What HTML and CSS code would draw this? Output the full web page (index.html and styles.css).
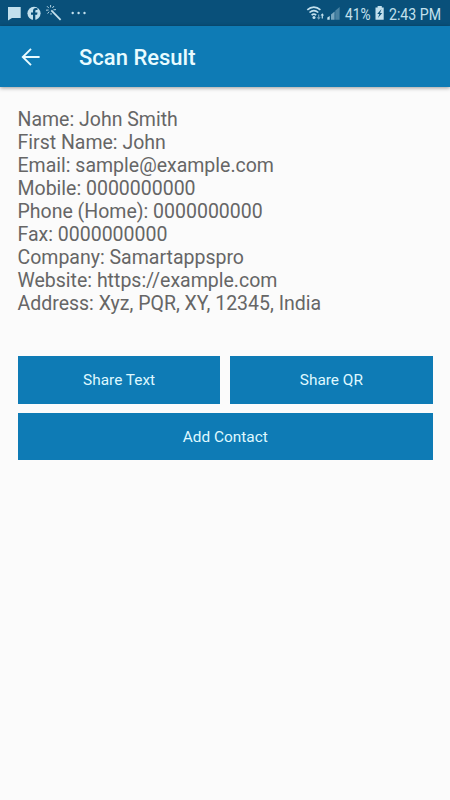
FILE: index.html
```
<!DOCTYPE html>
<html lang="en">
<head>
    <meta charset="UTF-8">
    <meta name="viewport" content="width=device-width, initial-scale=1.0">
    <title>Scan Result</title>
    <link rel="stylesheet" href="styles.css">
</head>
<body>
    <!-- Status bar -->
    <div class="status-bar">
        <svg class="status-left" width="100" height="26" viewBox="0 0 100 26">
            <path class="icon" d="M8 7h12.7v11h-8.7L8 20.5z"/>
            <circle class="icon" cx="34" cy="13.3" r="6.6"/>
            <path class="icon-cut" d="M33 20v-5.2h-2v-2.3h2v-1.6c0-1.9 1.1-2.9 2.9-2.9l1.6.2v1.8h-1c-.9 0-1.2.5-1.2 1.2v1.3h2.2l-.4 2.3h-1.8V20z"/>
            <path class="stroke wand" d="M51.3 10.4l9.3 9.4"/>
            <path class="stroke rays" d="M50.6 5v2.4M54 6l-1.6 2M56 9.6l-2.6.2M47 6.2l1.9 1.9M46 10.2l2.6-.2M47.6 13.6l1.5-1.9M51 13v1.8"/>
            <circle class="icon" cx="72.7" cy="13" r="1.2"/>
            <circle class="icon" cx="78.6" cy="13" r="1.2"/>
            <circle class="icon" cx="84.5" cy="13" r="1.2"/>
        </svg>
        <svg class="status-right" width="150" height="26" viewBox="0 0 150 26">
            <path class="stroke wifi" d="M7.3 9.9c3.9-3.7 9.2-3.7 13.1 0M9.5 12.5c2.7-2.4 6.1-2.4 8.8 0M11.6 15.1c1.4-1.2 3.2-1.2 4.6 0"/>
            <circle class="icon" cx="14" cy="17.4" r="1.5"/>
            <path class="icon dim" d="M18.1 14.6h1.2v2.6h1.4l-2 2.6-2-2.6h1.4z"/>
            <path class="icon" d="M22.3 13.2l1.8 2.3h-1.2v2.9h-1.2v-2.9h-1.2z"/>
            <path class="icon" d="M27.3 17.6l2.4-1.6v3.8h-2.4z"/>
            <path class="icon dim" d="M31 14.6l3.6-3.2v8.4H31z"/>
            <path class="icon faint" d="M35.2 10.8l4.4-3.8v12.8h-4.4z"/>
            <text class="status-text" x="45" y="20" textLength="25.5" lengthAdjust="spacingAndGlyphs">41%</text>
            <path class="icon" d="M77.6 6h4.2v1.5h1.9v12.2h-8.2V7.5h2.1z"/>
            <path class="icon-cut" d="M81.5 9l-4.3 5h2.2l-1.5 4 4.3-5H80z"/>
            <text class="status-text" x="89" y="20" textLength="52" lengthAdjust="spacingAndGlyphs">2:43 PM</text>
        </svg>
    </div>

    <!-- Toolbar -->
    <header class="toolbar">
        <svg class="back" width="20" height="20" viewBox="0 0 20 20">
            <path d="M18.6 10H2M10 1.8L1.8 10l8.2 8.2"/>
        </svg>
        <h1 class="title">Scan Result</h1>
    </header>

    <main class="content">
        <div class="result">
            <div>Name: John Smith</div>
            <div>First Name: John</div>
            <div>Email: sample@example.com</div>
            <div>Mobile: 0000000000</div>
            <div>Phone (Home): 0000000000</div>
            <div>Fax: 0000000000</div>
            <div>Company: Samartappspro</div>
            <div>Website: https://example.com</div>
            <div>Address: Xyz, PQR, XY, 12345, India</div>
        </div>
        <div class="buttons">
            <button class="btn">Share Text</button>
            <button class="btn">Share QR</button>
            <button class="btn wide">Add Contact</button>
        </div>
    </main>
</body>
</html>
```

FILE: styles.css
```
body {
    margin: 0;
    min-height: 100vh;
    font-family: Roboto, sans-serif;
    background: #fbfbfb;
}

.status-bar {
    display: flex;
    justify-content: space-between;
    height: 26px;
    background: #09507a;
}

.icon {
    fill: #c3e0ed;
}

.icon-cut {
    fill: #09507a;
}

.dim {
    opacity: 0.6;
}

.faint {
    opacity: 0.35;
}

.stroke {
    fill: none;
    stroke: #c3e0ed;
}

.wand {
    stroke-width: 1.8;
}

.rays {
    stroke-width: 0.9;
}

.wifi {
    stroke-width: 1.6;
}

.status-text {
    font-size: 16.5px;
    fill: #c3e0ed;
}

.toolbar {
    display: flex;
    align-items: center;
    height: 61px;
    padding-left: 21px;
    background: #0e7bb5;
    box-shadow: 0 1px 4px rgba(0, 0, 0, 0.4);
}

.back {
    fill: none;
    stroke: #e8fbff;
    stroke-width: 1.9;
}

.title {
    margin: 0 0 0 38px;
    padding-top: 2px;
    font-size: 22px;
    font-weight: 500;
    color: #e8fbff;
}

.content {
    padding: 21px 17.5px 0;
}

.result {
    font-size: 19.5px;
    line-height: 23px;
    color: #666;
}

.buttons {
    display: grid;
    grid-template-columns: 1fr 1fr;
    gap: 9px 10px;
    margin: 41px 0 0 0.5px;
}

.btn {
    height: 48px;
    padding: 0;
    border: 0;
    font-family: inherit;
    font-size: 15.4px;
    color: #dff8ff;
    background: #0e7bb5;
}

.wide {
    height: 47px;
    grid-column: span 2;
}
```
